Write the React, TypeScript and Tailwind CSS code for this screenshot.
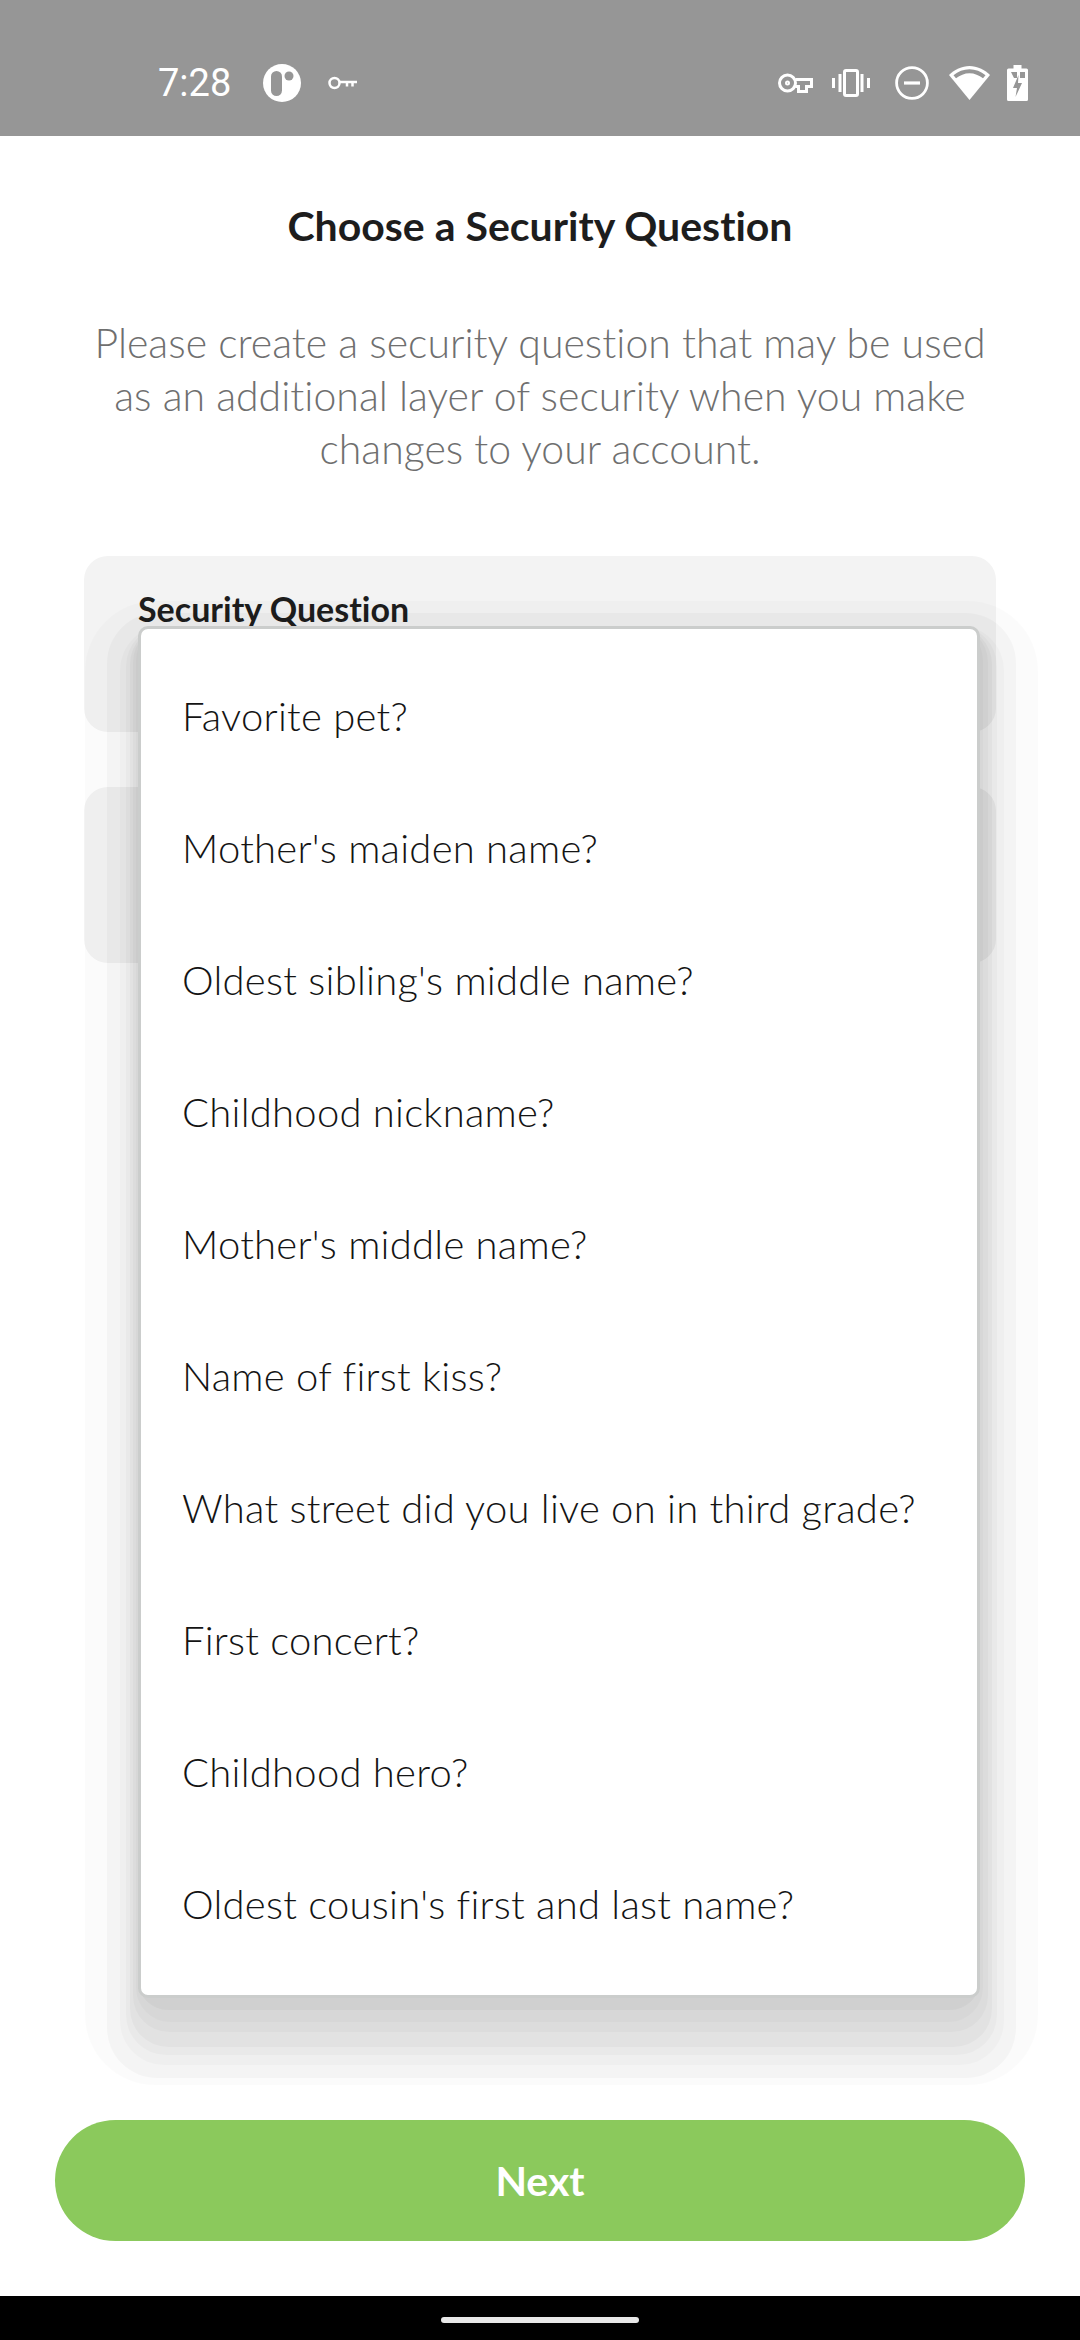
import React from "react";

const questions = [
  "Favorite pet?",
  "Mother's maiden name?",
  "Oldest sibling's middle name?",
  "Childhood nickname?",
  "Mother's middle name?",
  "Name of first kiss?",
  "What street did you live on in third grade?",
  "First concert?",
  "Childhood hero?",
  "Oldest cousin's first and last name?",
];

// stepped drop shadow behind the menu, outermost first
const shadowLayers = [
  "-left-[53px] -right-[58px] top-[-25px] -bottom-[87px] rounded-[70px] bg-[rgba(0,0,0,0.014)]",
  "-left-[31px] -right-[36px] top-[-13px] -bottom-[80px] rounded-[50px] bg-[rgba(0,0,0,0.027)]",
  "-left-[18px] -right-[24px] top-0 -bottom-[67px] rounded-[44px] bg-[rgba(0,0,0,0.02)]",
  "-left-[12px] -right-[17px] top-0 -bottom-[57px] rounded-[40px] bg-[rgba(0,0,0,0.024)]",
  "-left-[8px] -right-[12px] top-0 -bottom-[49px] rounded-[38px] bg-[rgba(0,0,0,0.027)]",
  "-left-[5px] -right-[8px] top-0 -bottom-[34px] rounded-[36px] bg-[rgba(0,0,0,0.024)]",
  "-left-[2px] -right-[3px] top-0 -bottom-[24px] rounded-[34px] bg-[rgba(0,0,0,0.02)]",
  "left-0 right-0 top-0 -bottom-[12px] rounded-[30px] bg-[rgba(0,0,0,0.03)]",
];

const StatusBar = () => (
  <div className="h-[136px] bg-[#969696] flex items-center text-white pl-[158px] pr-[52px] pt-[30px]">
    <span className="font-['Roboto',sans-serif] text-[38px] leading-none w-[105px]">7:28</span>
    <svg width="38" height="38" viewBox="0 0 38 38">
      <circle cx="19" cy="19" r="19" fill="#fff" />
      <rect x="8" y="7" width="11" height="25" rx="5.5" fill="#969696" />
      <circle cx="26" cy="12" r="4.500" fill="#969696" />
    </svg>
    <svg width="29" height="14" viewBox="0 0 29 14" className="ml-[27px]" fill="none" stroke="#fff" strokeWidth="2.500">
      <circle cx="6.500" cy="7" r="5" />
      <path d="M11.500 6h17.500M19 6v4.500M24.500 6v4.500" />
    </svg>
    <div className="flex-1" />
    <svg width="35" height="20" viewBox="0 0 35 20" fill="none" stroke="#fff" strokeWidth="3">
      <circle cx="9.500" cy="10" r="8" />
      <path d="M17.500 6.500H33.500V13.500H28.500V18.500H20.500V13.500H17.500" />
      <circle cx="9.500" cy="10" r="1" />
    </svg>
    <svg width="38" height="28" viewBox="0 0 38 28" fill="none" stroke="#fff" className="ml-[19px]">
      <rect x="12.500" y="1.500" width="13" height="25" rx="1.500" strokeWidth="3" />
      <path d="M8 5v18M30 5v18" strokeWidth="3" />
      <path d="M1.500 9v10M36.500 9v10" strokeWidth="3" />
    </svg>
    <svg width="34" height="34" viewBox="0 0 34 34" fill="none" stroke="#fff" strokeWidth="2.800" className="ml-[25px]">
      <circle cx="17" cy="17" r="15.400" />
      <path d="M9 17h16" strokeWidth="3.200" />
    </svg>
    <svg width="41" height="34" viewBox="0 0 41 34" className="ml-[20px]">
      <path d="M0 9C5.500 3.500 13 0 20.500 0S35.500 3.500 41 9L20.500 34z" fill="#fff" />
      <path d="M4.500 9.200C9 5.500 14.500 3.200 20.500 3.200S32 5.500 36.500 9.200L34 12.300C30 9.300 25.500 7.300 20.500 7.300S11 9.300 7 12.300z" fill="#969696" />
    </svg>
    <svg width="21" height="36" viewBox="0 0 21 36" className="ml-[17px]">
      <path d="M6.500 0h8v3.500h5A1.500 1.500 0 0 1 21 5v29.500a1.500 1.500 0 0 1-1.500 1.500h-18A1.500 1.500 0 0 1 0 34.500V5a1.500 1.500 0 0 1 1.500-1.500h5z" fill="#fff" />
      <path d="M4 7h6v6H7zM13 7h5v6h-5z" fill="#969696" />
      <path d="M11.500 10L6 23h4l-1.500 9 6.500-14h-4z" fill="#969696" />
    </svg>
  </div>
);

const App: React.FC = () => {
  return (
    <div className="w-[1080px] h-[2340px] bg-white flex flex-col font-['Lato',sans-serif] [font-variant-ligatures:none] overflow-hidden">
      <StatusBar />

      <div className="flex-1 relative flex flex-col items-center">
        <h1 className="mt-[67px] text-[41px] leading-[46px] font-bold text-[#1d1d1d]">
          Choose a Security Question
        </h1>
        <p className="mt-[67px] w-[920px] text-center text-[41px] leading-[53px] font-light text-[#6f6f6f]">
          Please create a security question that may be used as an additional layer of security when you make changes to
          your account.
        </p>

        <div className="mt-[81px] w-[912px] flex flex-col gap-[55px]">
          <div className="h-[176px] rounded-[24px] bg-[#f3f3f3] pl-[54px] pt-[34px]">
            <span className="text-[34px] leading-[38px] font-bold text-[#1d1d1d] block">Security Question</span>
          </div>
          <div className="h-[176px] rounded-[24px] bg-[#f3f3f3]" />
        </div>

        {/* question dropdown */}
        <div className="absolute left-[138px] top-[490px] w-[842px] h-[1372px]">
          {shadowLayers.map((layer) => (
            <div key={layer} className={`absolute ${layer}`} />
          ))}
          <div className="relative h-full rounded-[10px] bg-white border-[3px] border-[#cbcdcc] flex flex-col pt-[21px]">
            {questions.map((q) => (
              <div
                key={q}
                className="h-[132px] shrink-0 flex items-center pl-[41px] text-[40px] tracking-[0.25px] font-light text-[#141414]"
              >
                {q}
              </div>
            ))}
          </div>
        </div>

        <div className="flex-1" />
        <button className="w-[970px] h-[121px] mb-[55px] rounded-full bg-[#8bc95c] text-white text-[41px] font-bold">
          Next
        </button>
      </div>

      <div className="h-[44px] bg-black flex items-end justify-center pb-[17px]">
        <div className="w-[198px] h-[6px] rounded-full bg-[#e8e8e8]" />
      </div>
    </div>
  );
};

export default App;
